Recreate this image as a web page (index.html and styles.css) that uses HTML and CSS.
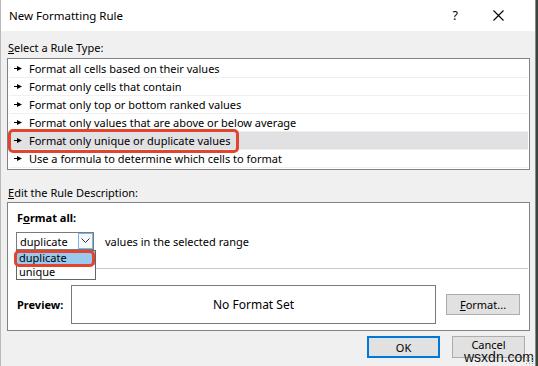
FILE: index.html
```html
<!DOCTYPE html>
<html lang="en">
<head>
    <meta charset="UTF-8">
    <link rel="stylesheet" href="styles.css">
    <title>New Formatting Rule</title>
</head>
<body>

    <div class="dialog">

        <div class="titlebar">
            <span class="title">New Formatting Rule</span>
            <span class="help">?</span>
            <svg class="close" width="11" height="11" viewBox="0 0 11 11">
                <path d="M0.5 0.5 L10.5 10.5 M10.5 0.5 L0.5 10.5" stroke="#000" stroke-width="1.1" fill="none"/>
            </svg>
        </div>

        <div class="content">
            <div class="label"><u>S</u>elect a Rule Type:</div>

            <ul class="rules">
                <li><svg class="bullet" width="8" height="5" viewBox="0 0 8 5"><path d="M0 2h3v1H0z M3 0 L8 2.5 L3 5z" fill="#000"/></svg>Format all cells based on their values</li>
                <li><svg class="bullet" width="8" height="5" viewBox="0 0 8 5"><path d="M0 2h3v1H0z M3 0 L8 2.5 L3 5z" fill="#000"/></svg>Format only cells that contain</li>
                <li><svg class="bullet" width="8" height="5" viewBox="0 0 8 5"><path d="M0 2h3v1H0z M3 0 L8 2.5 L3 5z" fill="#000"/></svg>Format only top or bottom ranked values</li>
                <li><svg class="bullet" width="8" height="5" viewBox="0 0 8 5"><path d="M0 2h3v1H0z M3 0 L8 2.5 L3 5z" fill="#000"/></svg>Format only values that are above or below average</li>
                <li class="selected"><svg class="bullet" width="8" height="5" viewBox="0 0 8 5"><path d="M0 2h3v1H0z M3 0 L8 2.5 L3 5z" fill="#000"/></svg>Format only unique or duplicate values<span class="mark"></span></li>
                <li><svg class="bullet" width="8" height="5" viewBox="0 0 8 5"><path d="M0 2h3v1H0z M3 0 L8 2.5 L3 5z" fill="#000"/></svg>Use a formula to determine which cells to format</li>
            </ul>

            <div class="label desc-label"><u>E</u>dit the Rule Description:</div>

            <div class="panel">
                <div class="bold fmt-label">F<u>o</u>rmat all:</div>

                <div class="format-row">
                    <div class="combo">
                        <span class="combo-text">duplicate</span>
                        <span class="combo-btn">
                            <svg width="9" height="6" viewBox="0 0 9 6"><path d="M0.5 0.5 L4.5 4.5 L8.5 0.5" stroke="#333" stroke-width="1" fill="none"/></svg>
                        </span>
                        <ul class="options">
                            <li class="hl">duplicate<span class="mark"></span></li>
                            <li>unique</li>
                        </ul>
                    </div>
                    <span>values in the selected range</span>
                </div>

                <div class="sep"></div>

                <div class="preview-row">
                    <span class="bold">Preview:</span>
                    <div class="preview-box">No Format Set</div>
                    <div class="btn fmt-btn"><u>F</u>ormat...</div>
                </div>
            </div>

            <div class="actions">
                <div class="btn ok">OK</div>
                <div class="btn cancel">Cancel</div>
            </div>
        </div>

        <div class="watermark">wsxdn.com</div>
        <div class="grip"></div>
    </div>

</body>
</html>
```

FILE: styles.css
```css
body {
    margin: 0;
    background: #3a463e;
    font-family: "Noto Sans", "Open Sans", sans-serif;
    font-size: 11px;
    color: #000;
}

.dialog {
    position: relative;
    width: 536px;
    height: 366px;
    box-sizing: border-box;
    background: #f0f0f0;
    border-left: 1px solid #b9b9b9;
    border-right: 1px solid #8a8a8a;
    overflow: hidden;
}

.titlebar {
    height: 31px;
    background: #fff;
    display: flex;
    align-items: center;
    padding: 0 31px 0 8px;
}

.title {
    font-size: 11.5px;
    flex: 1;
}

.help {
    font-size: 12.5px;
    margin-right: 35px;
}

.content {
    padding: 0 5px 0 6px;
}

.label {
    line-height: 16px;
    padding: 9px 0 0 1px;
}

.desc-label {
    padding-top: 15px;
}

.rules {
    list-style: none;
    margin: 2px 0 0 0;
    padding: 1px;
    background: #fff;
    border: 1px solid #828282;
}

.rules li {
    position: relative;
    height: 17px;
    line-height: 17px;
    border-bottom: 1px solid #f0f0f0;
    padding-left: 5px;
    display: flex;
    align-items: center;
    white-space: nowrap;
}

.rules li.selected {
    background: #e1e1e4;
}

.bullet {
    margin-right: 7px;
    flex-shrink: 0;
}

.mark {
    position: absolute;
    border: 3px solid #e2452d;
    border-radius: 5px;
    box-sizing: border-box;
}

.rules .mark {
    left: -1px;
    top: -3px;
    width: 231px;
    height: 24px;
}

.panel {
    margin-top: 1px;
    background: #fff;
    border: 1px solid #828282;
    padding: 7px 0 6px 8px;
}

.bold {
    font-weight: bold;
}

.fmt-label {
    line-height: 16px;
    padding-left: 1px;
}

.format-row {
    display: flex;
    align-items: center;
    gap: 11px;
    margin-top: 6px;
    height: 18px;
}

.combo {
    position: relative;
    width: 78px;
    height: 18px;
    box-sizing: border-box;
    border: 1px solid #7a7a7a;
    display: flex;
    align-items: center;
}

.combo-text {
    flex: 1;
    padding-left: 3px;
}

.combo-btn {
    width: 15px;
    height: 16px;
    box-sizing: border-box;
    border: 1px solid #7eb4ea;
    background: #f4f9fe;
    display: flex;
    align-items: center;
    justify-content: center;
}

.options {
    position: absolute;
    left: -1px;
    top: 17px;
    width: 80px;
    box-sizing: border-box;
    margin: 0;
    padding: 0;
    list-style: none;
    background: #fff;
    border: 1px solid #646464;
    z-index: 2;
}

.options li {
    position: relative;
    height: 14px;
    line-height: 14px;
    padding-left: 2px;
}

.options li.hl {
    background: #99c9ef;
}

.options .mark {
    left: -3px;
    top: -1px;
    width: 81px;
    height: 17px;
}

.sep {
    height: 1px;
    background: #c8c8c8;
    margin: 18px 1px 0 0;
}

.preview-row {
    display: flex;
    align-items: center;
    margin-top: 16px;
}

.preview-row .bold {
    width: 54px;
    padding-left: 1px;
}

.preview-box {
    width: 363px;
    height: 37px;
    border: 1px solid #7a7a7a;
    display: flex;
    align-items: center;
    justify-content: center;
    font-size: 12px;
}

.btn {
    box-sizing: border-box;
    display: flex;
    align-items: center;
    justify-content: center;
    background: #e1e1e1;
    border: 1px solid #adadad;
}

.fmt-btn {
    width: 74px;
    height: 21px;
    margin-left: 10px;
}

.actions {
    display: flex;
    justify-content: flex-end;
    gap: 12px;
    margin-top: 5px;
    padding-right: 5px;
}

.actions .btn {
    width: 73px;
    height: 22px;
}

.actions .ok {
    border: 2px solid #0078d7;
}

.actions .cancel {
    align-items: flex-start;
    line-height: 12px;
    padding-top: 2px;
}

.watermark {
    position: absolute;
    left: 463px;
    top: 351px;
    font-family: "Liberation Sans", sans-serif;
    font-size: 14px;
    line-height: 12px;
    color: #111;
    white-space: nowrap;
}

.grip {
    position: absolute;
    right: 2px;
    bottom: 2px;
    width: 8px;
    height: 8px;
    background-image: radial-gradient(circle, #a0a0a0 0.8px, transparent 1px);
    background-size: 3px 3px;
}
```
